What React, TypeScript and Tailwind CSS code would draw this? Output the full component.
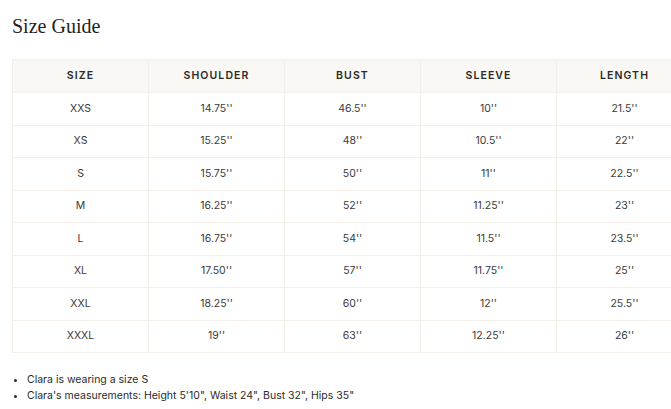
import React from "react";

const COLUMNS = ["Size", "Shoulder", "Bust", "Sleeve", "Length"];

const ROWS: string[][] = [
  ["XXS", "14.75''", "46.5''", "10''", "21.5''"],
  ["XS", "15.25''", "48''", "10.5''", "22''"],
  ["S", "15.75''", "50''", "11''", "22.5''"],
  ["M", "16.25''", "52''", "11.25''", "23''"],
  ["L", "16.75''", "54''", "11.5''", "23.5''"],
  ["XL", "17.50''", "57''", "11.75''", "25''"],
  ["XXL", "18.25''", "60''", "12''", "25.5''"],
  ["XXXL", "19''", "63''", "12.25''", "26''"],
];

export default function App() {
  return (
    <div className="w-[671px] h-[409px] overflow-hidden bg-white px-3 text-[#222] font-['Inter','Liberation_Sans',sans-serif]">
      {/* Title */}
      <h2 className="pt-[13px] h-[59px] text-[20px] leading-[26px] text-[#1f1f1f] font-['Liberation_Serif',serif]">
        Size Guide
      </h2>

      {/* Table */}
      <table className="w-[680px] border-collapse table-fixed">
        <thead>
          <tr className="bg-[#faf8f4]">
            {COLUMNS.map((col) => (
              <th
                key={col}
                className="h-[33px] w-[136px] border border-[#f4f0e9] text-center align-middle text-[10.5px] font-semibold uppercase tracking-[1.1px] text-[#2a2a2a]"
              >
                {col}
              </th>
            ))}
          </tr>
        </thead>
        <tbody>
          {ROWS.map((row) => (
            <tr key={row[0]}>
              {row.map((cell, i) => (
                <td
                  key={i}
                  className="h-[32.5px] border border-[#f4f0e9] text-center align-middle text-[10.5px] text-[#3a3a3a]"
                >
                  {cell}
                </td>
              ))}
            </tr>
          ))}
        </tbody>
      </table>

      {/* Notes */}
      <ul className="mt-[19px] list-disc pl-[15px] text-[10.5px] leading-4 text-[#2a2a2a]">
        <li>Clara is wearing a size S</li>
        <li>Clara's measurements: Height 5'10", Waist 24", Bust 32", Hips 35"</li>
      </ul>
    </div>
  );
}
